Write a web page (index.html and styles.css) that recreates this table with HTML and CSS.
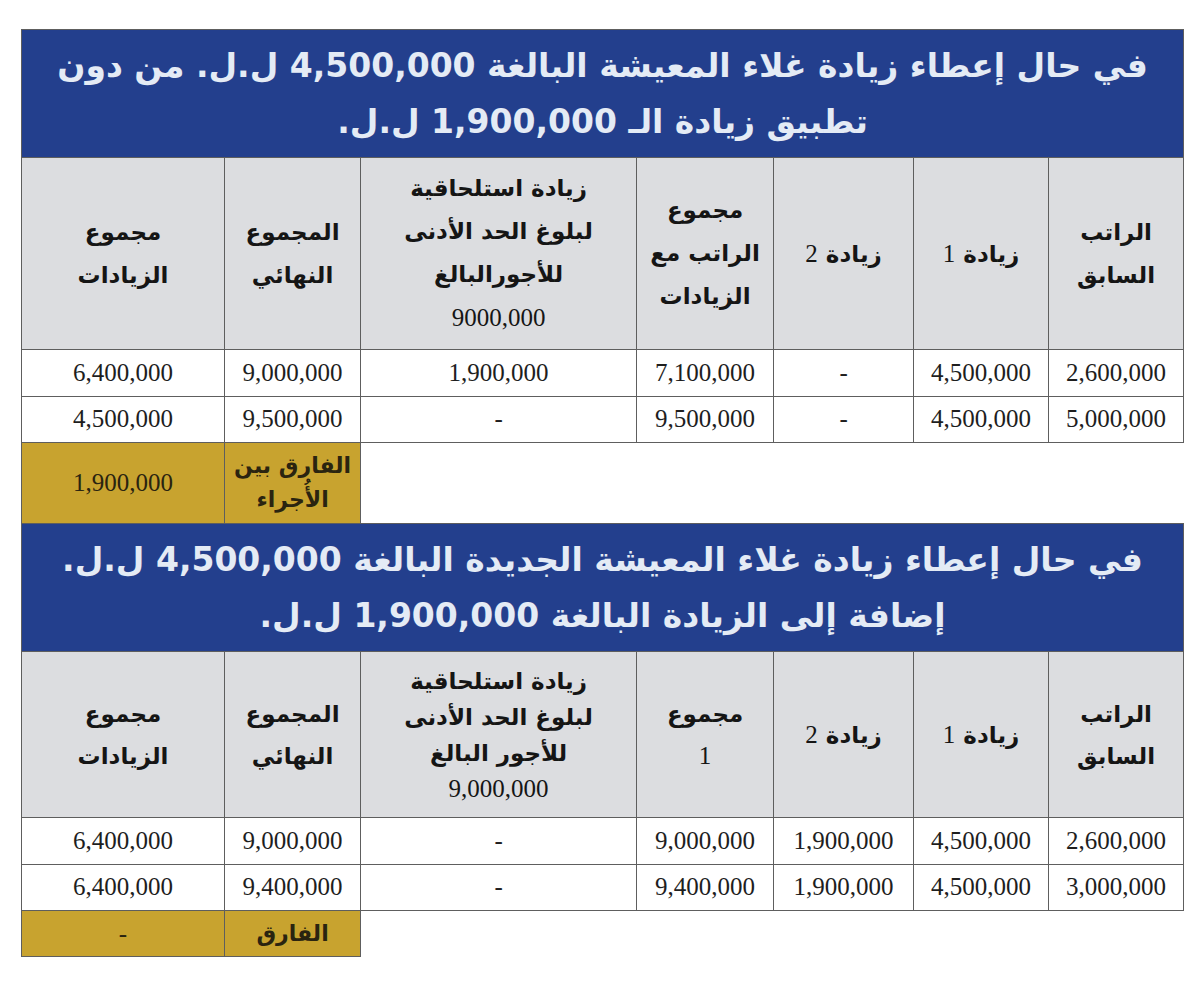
FILE: index.html
```html
<!DOCTYPE html>
<html lang="ar">
<head>
<meta charset="utf-8">
<title>زيادة غلاء المعيشة</title>
<link rel="stylesheet" href="styles.css">
</head>
<body>
<div class="page">
<table class="grid" dir="rtl">
  <colgroup>
    <col class="c1"><col class="c2"><col class="c3"><col class="c4"><col class="c5"><col class="c6"><col class="c7">
  </colgroup>
  <tr class="title-row">
    <td colspan="7" class="title">في حال إعطاء زيادة غلاء المعيشة البالغة 4,500,000 ل.ل. من دون<br>تطبيق زيادة الـ 1,900,000 ل.ل.</td>
  </tr>
  <tr class="head-row h1">
    <th>الراتب<br>السابق</th>
    <th>زيادة <span class="num">1</span></th>
    <th>زيادة <span class="num">2</span></th>
    <th>مجموع<br>الراتب مع<br>الزيادات</th>
    <th>زيادة استلحاقية<br>لبلوغ الحد الأدنى<br>للأجورالبالغ<br><span class="num">9000,000</span></th>
    <th>المجموع<br>النهائي</th>
    <th>مجموع<br>الزيادات</th>
  </tr>
  <tr class="data-row">
    <td>2,600,000</td><td>4,500,000</td><td>-</td><td>7,100,000</td><td>1,900,000</td><td>9,000,000</td><td>6,400,000</td>
  </tr>
  <tr class="data-row">
    <td>5,000,000</td><td>4,500,000</td><td>-</td><td>9,500,000</td><td>-</td><td>9,500,000</td><td>4,500,000</td>
  </tr>
  <tr class="gold-row g1">
    <td colspan="5" class="blank"></td>
    <td class="gold label">الفارق بين<br>الأُجراء</td>
    <td class="gold">1,900,000</td>
  </tr>
  <tr class="title-row">
    <td colspan="7" class="title">في حال إعطاء زيادة غلاء المعيشة الجديدة البالغة 4,500,000 ل.ل.<br>إضافة إلى الزيادة البالغة 1,900,000 ل.ل.</td>
  </tr>
  <tr class="head-row h2">
    <th>الراتب<br>السابق</th>
    <th>زيادة <span class="num">1</span></th>
    <th>زيادة <span class="num">2</span></th>
    <th>مجموع<br><span class="num">1</span></th>
    <th>زيادة استلحاقية<br>لبلوغ الحد الأدنى<br>للأجور البالغ<br><span class="num">9,000,000</span></th>
    <th>المجموع<br>النهائي</th>
    <th>مجموع<br>الزيادات</th>
  </tr>
  <tr class="data-row">
    <td>2,600,000</td><td>4,500,000</td><td>1,900,000</td><td>9,000,000</td><td>-</td><td>9,000,000</td><td>6,400,000</td>
  </tr>
  <tr class="data-row">
    <td>3,000,000</td><td>4,500,000</td><td>1,900,000</td><td>9,400,000</td><td>-</td><td>9,400,000</td><td>6,400,000</td>
  </tr>
  <tr class="gold-row g2">
    <td colspan="5" class="blank"></td>
    <td class="gold label">الفارق</td>
    <td class="gold">-</td>
  </tr>
</table>
</div>
</body>
</html>
```
FILE: styles.css
```css
html, body {
  margin: 0;
  padding: 0;
  background: #ffffff;
}
.page {
  padding: 29px 0 0 21px;
}
.grid {
  border-collapse: collapse;
  table-layout: fixed;
  width: 1163px;
  font-family: "Liberation Serif", "DejaVu Sans", serif;
  color: #1e1e1e;
}
.c1 { width: 135px; }
.c2 { width: 135px; }
.c3 { width: 140px; }
.c4 { width: 137px; }
.c5 { width: 276px; }
.c6 { width: 136px; }
.c7 { width: 203px; }

.grid td, .grid th {
  border: 1px solid #5e5e5e;
  padding: 0;
  text-align: center;
  vertical-align: middle;
}
.title-row td.title {
  background: #233f8d;
  color: #e4ebf5;
  font-family: "DejaVu Sans", sans-serif;
  font-weight: bold;
  font-size: 33px;
  line-height: 56px;
  height: 126px;
  padding-top: 1px;
}
.head-row th {
  background: #dcdde0;
  font-family: "DejaVu Sans", serif;
  font-weight: bold;
  font-size: 23px;
  line-height: 43px;
  color: #151515;
}
.head-row .num {
  font-family: "Liberation Serif", serif;
  font-weight: normal;
  font-size: 25px;
}
.h1 th { height: 191px; }
.h2 th {
  height: 165px;
  line-height: 36px;
}
.h2 th:nth-child(4), .h2 th:nth-child(6), .h2 th:nth-child(7), .h2 th:nth-child(1) {
  line-height: 42px;
}
.data-row td {
  font-size: 25px;
  height: 45.5px;
  background: #ffffff;
}
.gold-row td.gold {
  background: #c8a32f;
  font-size: 25px;
  color: #2a2410;
}
.gold-row td.label {
  font-family: "DejaVu Sans", sans-serif;
  font-weight: bold;
  font-size: 22px;
  line-height: 34px;
}
.g1 td { height: 80px; }
.g2 td { height: 45px; }
.gold-row td.blank {
  border: none;
  background: #ffffff;
}
```
